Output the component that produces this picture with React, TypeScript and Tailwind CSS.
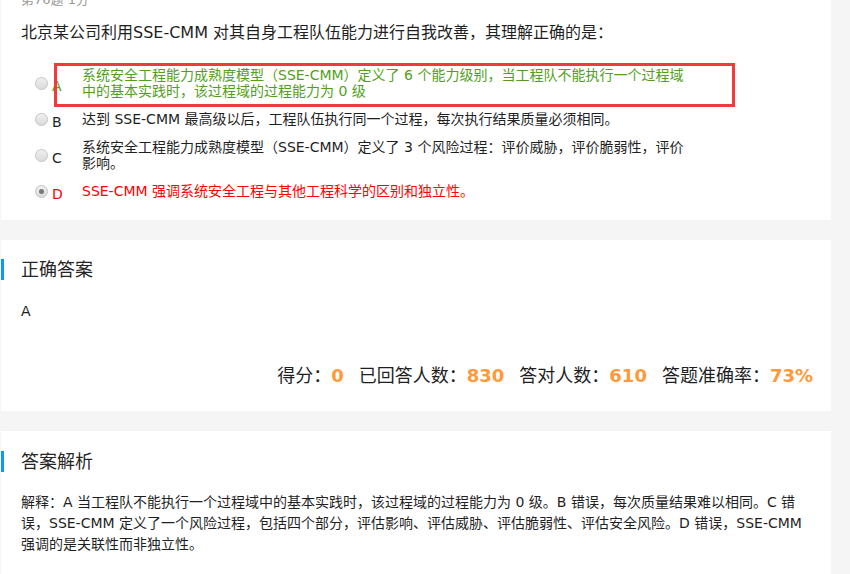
import React from "react";

const font = { fontFamily: '"DejaVu Sans", "Noto Sans CJK SC", sans-serif' };

type Opt = { key: string; text: string; tone: "ok" | "plain" | "wrong"; checked?: boolean };

const options: Opt[] = [
  {
    key: "A",
    text: "系统安全工程能力成熟度模型（SSE-CMM）定义了 6 个能力级别，当工程队不能执行一个过程域中的基本实践时，该过程域的过程能力为 0 级",
    tone: "ok",
  },
  {
    key: "B",
    text: "达到 SSE-CMM 最高级以后，工程队伍执行同一个过程，每次执行结果质量必须相同。",
    tone: "plain",
  },
  {
    key: "C",
    text: "系统安全工程能力成熟度模型（SSE-CMM）定义了 3 个风险过程：评价威胁，评价脆弱性，评价影响。",
    tone: "plain",
  },
  {
    key: "D",
    text: "SSE-CMM 强调系统安全工程与其他工程科学的区别和独立性。",
    tone: "wrong",
    checked: true,
  },
];

const toneClass = {
  ok: "text-[#52a01a]",
  plain: "text-[#1f1f1f]",
  wrong: "text-[#ff0000]",
};

const Radio = ({ checked }: { checked?: boolean }) => (
  <div className="w-[13px] h-[13px] shrink-0 rounded-full border border-[#c4c4c4] bg-gradient-to-b from-[#f0f0f0] to-[#dadada] flex items-center justify-center">
    {checked && <div className="w-[5px] h-[5px] rounded-full bg-[#7a7a7a]" />}
  </div>
);

const OptionRow = ({ opt }: { opt: Opt }) => (
  <div className="flex items-center pl-[34px]">
    <Radio checked={opt.checked} />
    <span className={`w-[34px] shrink-0 pl-[4px] translate-y-[3px] text-[14px] leading-[16px] ${toneClass[opt.tone]}`}>
      {opt.key}
    </span>
    <p className={`w-[608px] text-[14px] leading-[16px] ${toneClass[opt.tone]}`}>{opt.text}</p>
  </div>
);

const SectionTitle = ({ title }: { title: string }) => (
  <div className="border-l-[3px] border-[#1196f5] pl-[17px] h-[21px] flex items-center">
    <h2 className="text-[18px] leading-[21px] text-[#262626]">{title}</h2>
  </div>
);

const Stat = ({ label, value, last }: { label: string; value: string; last?: boolean }) => (
  <span className={last ? "" : "mr-[15px]"}>
    {label}
    <span className="font-bold text-[#ff993a]">{value}</span>
  </span>
);

export default function App() {
  return (
    <div style={font} className="w-[850px] h-[574px] overflow-hidden bg-[#f5f5f5]">
      {/* question card */}
      <div className="ml-[1px] w-[830px] bg-white pl-[20px] pb-[21px]">
        <div className="-mt-[8px] text-[13px] leading-[16px] text-[#999]">第76题 1分</div>
        <p className="mt-[13px] text-[16px] leading-[24px] text-[#1f1f1f]">
          北京某公司利用SSE-CMM 对其自身工程队伍能力进行自我改善，其理解正确的是：
        </p>
        <div className="relative -ml-[20px] mt-[22px] flex flex-col gap-[12px]">
          {options.map((o) => (
            <OptionRow key={o.key} opt={o} />
          ))}
          <div className="absolute left-[53px] -top-[4px] w-[681px] h-[44px] border-[3px] border-[#ef3b3b]" />
        </div>
      </div>

      {/* correct answer card */}
      <div className="ml-[1px] mt-[20px] w-[830px] bg-white pt-[19px] pb-[23px]">
        <SectionTitle title="正确答案" />
        <p className="pl-[20px] mt-[21px] text-[14px] leading-[20px] text-[#1f1f1f]">A</p>
        <div className="mt-[43px] pr-[18px] flex justify-end text-[18px] leading-[24px] text-[#1f1f1f]">
          <Stat label="得分：" value="0" />
          <Stat label="已回答人数：" value="830" />
          <Stat label="答对人数：" value="610" />
          <Stat label="答题准确率：" value="73%" last />
        </div>
      </div>

      {/* analysis card */}
      <div className="ml-[1px] mt-[20px] w-[830px] bg-white pt-[20px] pb-[40px]">
        <SectionTitle title="答案解析" />
        <p className="pl-[20px] mt-[20px] w-[804px] text-[14px] leading-[21px] text-[#1f1f1f]">
          解释：A 当工程队不能执行一个过程域中的基本实践时，该过程域的过程能力为 0 级。B 错误，每次质量结果难以相同。C 错误，SSE-CMM 定义了一个风险过程，包括四个部分，评估影响、评估威胁、评估脆弱性、评估安全风险。D 错误，SSE-CMM 强调的是关联性而非独立性。
        </p>
      </div>
    </div>
  );
}
